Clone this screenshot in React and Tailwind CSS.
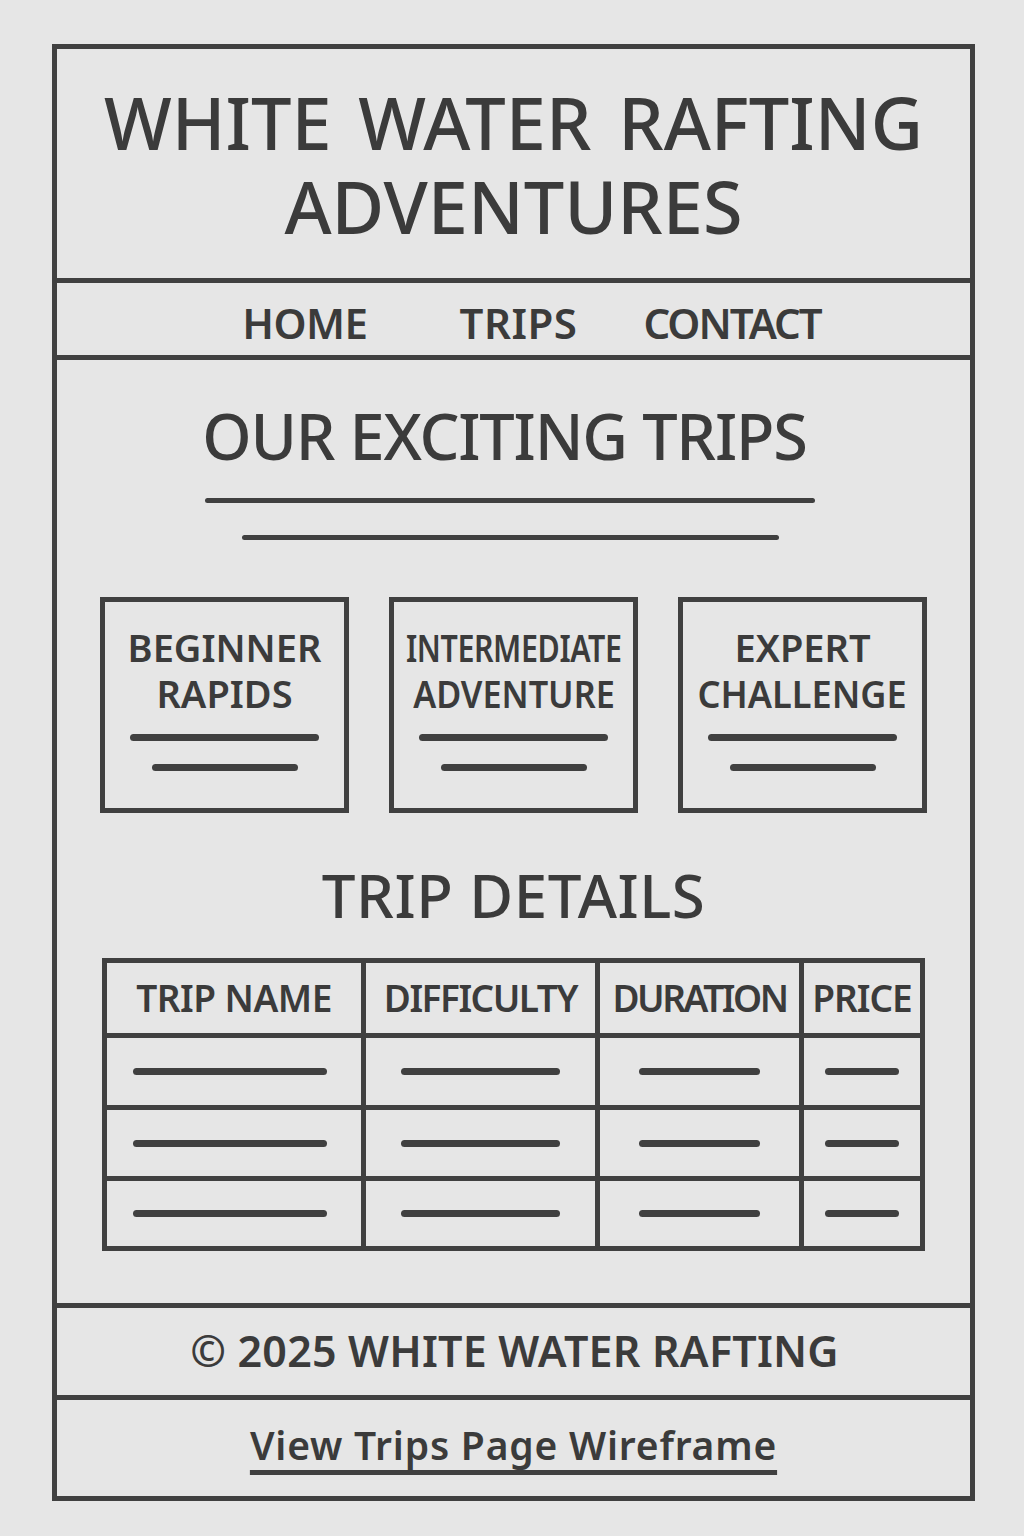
import React from "react";

const ink = "text-[#3b3b3b]";

function Dash({ w, thick = "h-[6px]", className = "" }) {
  return <div className={`${thick} rounded-full bg-[#404040] ${className}`} style={{ width: w }} />;
}

function Card({ l1, l2, s1 = "", s2 = "" }) {
  return (
    <div className="h-[216px] border-[5px] border-[#404040] flex flex-col items-center pt-[22px]">
      <div className="flex flex-col items-center text-[38px] leading-[46px] font-semibold whitespace-nowrap">
        <span className={`inline-block ${s1}`}>{l1}</span>
        <span className={`inline-block ${s2}`}>{l2}</span>
      </div>
      <Dash w={189} thick="h-[7px]" className="mt-[18px]" />
      <Dash w={146} thick="h-[7px]" className="mt-[23px]" />
    </div>
  );
}

function Row({ h, widths }) {
  return (
    <div className={`grid grid-cols-[254px_234px_204px_121px] border-t-[5px] border-[#404040] ${h}`}>
      {widths.map((w, i) => (
        <div
          key={i}
          className={`flex items-center justify-center ${i > 0 ? "border-l-[5px] border-[#404040]" : ""} ${
            i === 0 ? "pr-[8px]" : ""
          }`}
        >
          <Dash w={w} thick="h-[7px]" />
        </div>
      ))}
    </div>
  );
}

export default function App() {
  const headers = [
    ["TRIP NAME", "tracking-[-0.5px]"],
    ["DIFFICULTY", "tracking-[-1.5px]"],
    ["DURATION", "tracking-[-2.5px]"],
    ["PRICE", "tracking-[-1px]"],
  ];
  return (
    <div
      className={`min-h-[1536px] w-[1024px] bg-[#e6e6e6] pt-[44px] pl-[52px] ${ink}`}
      style={{ fontFamily: '"Noto Sans", "Open Sans", sans-serif' }}
    >
      <div className="w-[923px] h-[1457px] border-[5px] border-[#404040] flex flex-col">
        {/* Header */}
        <header className="h-[234px] shrink-0 border-b-[5px] border-[#404040] flex items-center justify-center">
          <h1 className="text-[72px] leading-[84px] font-medium text-center tracking-[0px] [word-spacing:8px]">
            <span className="block">WHITE WATER RAFTING</span>
            <span className="block">ADVENTURES</span>
          </h1>
        </header>

        {/* Nav */}
        <nav className="h-[77px] shrink-0 border-b-[5px] border-[#404040] flex items-center justify-center pl-[36px] pt-[6px] text-[42px] font-semibold">
          <span className="tracking-[-0.5px]">HOME</span>
          <span className="ml-[92px] tracking-[0.5px]">TRIPS</span>
          <span className="ml-[66px] tracking-[-2px]">CONTACT</span>
        </nav>

        {/* Main */}
        <main className="h-[943px] shrink-0 flex flex-col items-center pt-[44px]">
          <h2 className="text-[63px] leading-[63px] font-medium tracking-[-1.2px] whitespace-nowrap pr-[18px]">
            OUR EXCITING TRIPS
          </h2>
          <Dash w={610} thick="h-[5px]" className="mt-[31px] mr-[7px]" />
          <Dash w={537} thick="h-[5px]" className="mt-[32px] mr-[7px]" />

          <div className="mt-[57px] w-[827px] grid grid-cols-3 gap-[40px]">
            <Card l1="BEGINNER" l2="RAPIDS" />
            <Card l1="INTERMEDIATE" l2="ADVENTURE" s1="scale-x-[0.8] tracking-[-0.5px]" s2="scale-x-[0.9]" />
            <Card l1="EXPERT" l2="CHALLENGE" s2="scale-x-[0.95]" />
          </div>

          <h2 className="mt-[52px] text-[60px] leading-[60px] font-medium tracking-[0.5px]">TRIP DETAILS</h2>

          <div className="mt-[33px] w-[823px] border-[5px] border-[#404040]">
            <div className="grid grid-cols-[254px_234px_204px_121px] h-[70px]">
              {headers.map(([t, tr], i) => (
                <div
                  key={t}
                  className={`flex items-center justify-center text-[37px] font-semibold whitespace-nowrap ${tr} ${
                    i > 0 ? "border-l-[5px] border-[#404040]" : ""
                  }`}
                >
                  {t}
                </div>
              ))}
            </div>
            <Row h="h-[72px]" widths={[194, 159, 121, 74]} />
            <Row h="h-[71px]" widths={[194, 159, 121, 74]} />
            <Row h="h-[70px]" widths={[194, 159, 121, 74]} />
          </div>
        </main>

        {/* Footer */}
        <footer className="h-[92px] shrink-0 border-t-[5px] border-[#404040] flex items-center justify-center text-[43px] font-semibold tracking-[0.2px] whitespace-nowrap pl-[2px]">
          © 2025 WHITE WATER RAFTING
        </footer>
        <div className="flex-1 border-t-[5px] border-[#404040] flex items-center justify-center pb-[6px]">
          <a
            href="#"
            className="text-[39px] font-semibold tracking-[0.8px] underline decoration-[5px] underline-offset-[10px] decoration-[#404040]"
          >
            View Trips Page Wireframe
          </a>
        </div>
      </div>
    </div>
  );
}
